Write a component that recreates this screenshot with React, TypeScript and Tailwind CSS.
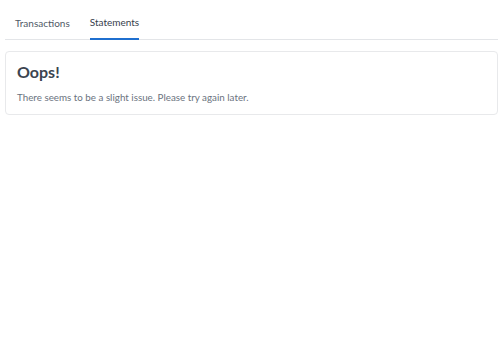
export default function App() {
  return (
    <div className="w-[500px] h-[345px] bg-white pl-[5px] pr-[2px] pt-[16px] font-['Lato',sans-serif]">
      <div className="flex border-b border-[#e3e5e8] pl-[10px] gap-[20px]">
        <button className="pb-[10px] text-[10px] leading-[12px] text-[#4f5966]">Transactions</button>
        <button className="pb-[10px] -mb-[1px] text-[10px] leading-[12px] text-[#36404c] border-b-2 border-[#1f6fcf]">Statements</button>
      </div>
      <div className="mt-[11px] rounded-[4px] border border-[#e8e9eb] px-[11px] pt-[10px] pb-[11px]">
        <h2 className="text-[16px] leading-[20px] font-bold text-[#3b4450]">Oops!</h2>
        <p className="mt-[9px] text-[9.8px] leading-[12px] text-[#6b7380]">There seems to be a slight issue. Please try again later.</p>
      </div>
    </div>
  )
}
